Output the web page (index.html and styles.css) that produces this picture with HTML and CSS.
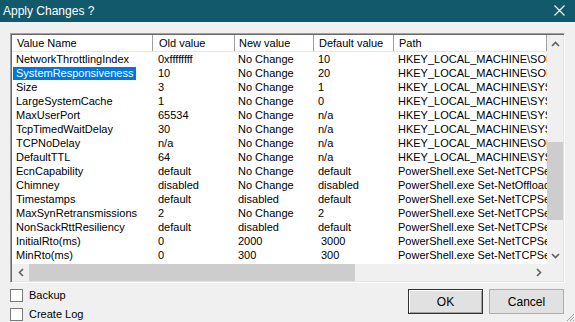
FILE: index.html
```html
<!DOCTYPE html>
<html>
<head>
<meta charset="utf-8">
<link rel="stylesheet" href="styles.css">
</head>
<body>
<div class="window">
  <div class="titlebar">
    <span class="title">Apply Changes ?</span>
    <svg class="close" width="11" height="11" viewBox="0 0 11 11"><path d="M0.5 0.5 L10.5 10.5 M10.5 0.5 L0.5 10.5" stroke="#fff" stroke-width="1.2" fill="none"/></svg>
  </div>
  <div class="content">
    <div class="listbox">
      <div class="viewport">
        <div class="row header">
          <div class="c c1">Value Name</div>
          <div class="c c2">Old value</div>
          <div class="c c3">New value</div>
          <div class="c c4">Default value</div>
          <div class="c c5">Path</div>
        </div>
        <div class="row"><div class="c c1"><span class="t">NetworkThrottlingIndex</span></div><div class="c c2">0xffffffff</div><div class="c c3">No Change</div><div class="c c4">10</div><div class="c c5">HKEY_LOCAL_MACHINE\SOFTWARE\Microsoft</div></div>
        <div class="row"><div class="c c1"><span class="t sel">SystemResponsiveness</span></div><div class="c c2">10</div><div class="c c3">No Change</div><div class="c c4">20</div><div class="c c5">HKEY_LOCAL_MACHINE\SOFTWARE\Microsoft</div></div>
        <div class="row"><div class="c c1"><span class="t">Size</span></div><div class="c c2">3</div><div class="c c3">No Change</div><div class="c c4">1</div><div class="c c5">HKEY_LOCAL_MACHINE\SYSTEM\CurrentControlSet</div></div>
        <div class="row"><div class="c c1"><span class="t">LargeSystemCache</span></div><div class="c c2">1</div><div class="c c3">No Change</div><div class="c c4">0</div><div class="c c5">HKEY_LOCAL_MACHINE\SYSTEM\CurrentControlSet</div></div>
        <div class="row"><div class="c c1"><span class="t">MaxUserPort</span></div><div class="c c2">65534</div><div class="c c3">No Change</div><div class="c c4">n/a</div><div class="c c5">HKEY_LOCAL_MACHINE\SYSTEM\CurrentControlSet</div></div>
        <div class="row"><div class="c c1"><span class="t">TcpTimedWaitDelay</span></div><div class="c c2">30</div><div class="c c3">No Change</div><div class="c c4">n/a</div><div class="c c5">HKEY_LOCAL_MACHINE\SYSTEM\CurrentControlSet</div></div>
        <div class="row"><div class="c c1"><span class="t">TCPNoDelay</span></div><div class="c c2">n/a</div><div class="c c3">No Change</div><div class="c c4">n/a</div><div class="c c5">HKEY_LOCAL_MACHINE\SOFTWARE\Microsoft</div></div>
        <div class="row"><div class="c c1"><span class="t">DefaultTTL</span></div><div class="c c2">64</div><div class="c c3">No Change</div><div class="c c4">n/a</div><div class="c c5">HKEY_LOCAL_MACHINE\SYSTEM\CurrentControlSet</div></div>
        <div class="row"><div class="c c1"><span class="t">EcnCapability</span></div><div class="c c2">default</div><div class="c c3">No Change</div><div class="c c4">default</div><div class="c c5">PowerShell.exe Set-NetTCPSetting</div></div>
        <div class="row"><div class="c c1"><span class="t">Chimney</span></div><div class="c c2">disabled</div><div class="c c3">No Change</div><div class="c c4">disabled</div><div class="c c5">PowerShell.exe Set-NetOffloadGlobalSetting</div></div>
        <div class="row"><div class="c c1"><span class="t">Timestamps</span></div><div class="c c2">default</div><div class="c c3">disabled</div><div class="c c4">default</div><div class="c c5">PowerShell.exe Set-NetTCPSetting</div></div>
        <div class="row"><div class="c c1"><span class="t">MaxSynRetransmissions</span></div><div class="c c2">2</div><div class="c c3">No Change</div><div class="c c4">2</div><div class="c c5">PowerShell.exe Set-NetTCPSetting</div></div>
        <div class="row"><div class="c c1"><span class="t">NonSackRttResiliency</span></div><div class="c c2">default</div><div class="c c3">disabled</div><div class="c c4">default</div><div class="c c5">PowerShell.exe Set-NetTCPSetting</div></div>
        <div class="row"><div class="c c1"><span class="t">InitialRto(ms)</span></div><div class="c c2">0</div><div class="c c3">2000</div><div class="c c4 ind">3000</div><div class="c c5">PowerShell.exe Set-NetTCPSetting</div></div>
        <div class="row"><div class="c c1"><span class="t">MinRto(ms)</span></div><div class="c c2">0</div><div class="c c3">300</div><div class="c c4 ind">300</div><div class="c c5">PowerShell.exe Set-NetTCPSetting</div></div>
      </div>
      <div class="vscroll">
        <div class="arrow"><svg width="9" height="6" viewBox="0 0 9 6"><path d="M1 5 L4.5 1.5 L8 5" stroke="#606060" stroke-width="1.6" fill="none"/></svg></div>
        <div class="vtrack"><div class="vthumb"></div></div>
        <div class="arrow"><svg width="9" height="6" viewBox="0 0 9 6"><path d="M1 1 L4.5 4.5 L8 1" stroke="#606060" stroke-width="1.6" fill="none"/></svg></div>
      </div>
      <div class="hscroll">
        <div class="harrow"><svg width="6" height="9" viewBox="0 0 6 9"><path d="M5 1 L1.5 4.5 L5 8" stroke="#606060" stroke-width="1.6" fill="none"/></svg></div>
        <div class="htrack"><div class="hthumb"></div></div>
        <div class="harrow"><svg width="6" height="9" viewBox="0 0 6 9"><path d="M1 1 L4.5 4.5 L1 8" stroke="#606060" stroke-width="1.6" fill="none"/></svg></div>
      </div>
      <div class="corner"></div>
    </div>
    <div class="footer">
      <div class="checks">
        <label class="check"><span class="box"></span><span>Backup</span></label>
        <label class="check"><span class="box"></span><span>Create Log</span></label>
      </div>
      <div class="buttons">
        <div class="btn default">OK</div>
        <div class="btn">Cancel</div>
      </div>
    </div>
  </div>
  <svg class="grip" width="10" height="10" viewBox="0 0 10 10"><path d="M9 2 L2 9 M9 5 L5 9 M9 8 L8 9" stroke="#a0a0a0" stroke-width="1" fill="none"/></svg>
</div>
</body>
</html>
```
FILE: styles.css
```css
html, body {
  margin: 0;
  padding: 0;
}
body {
  width: 575px;
  height: 322px;
  overflow: hidden;
  background: #f0f0f0;
  font-family: "Liberation Sans", Arial, sans-serif;
  font-size: 11px;
  color: #000;
}
.window {
  position: relative;
  width: 575px;
  height: 322px;
}
.titlebar {
  height: 22px;
  background: #125a6b;
  color: #fff;
  display: flex;
  align-items: center;
  justify-content: space-between;
  padding: 0 10px 0 3px;
}
.title {
  font-size: 12px;
  line-height: 22px;
}
.close {
  display: block;
  margin-top: -2px;
}
.content {
  padding: 11px 11px 0 10px;
}
.listbox {
  width: 551px;
  height: 246px;
  border-style: solid;
  border-width: 1px;
  border-color: #a0a0a0 #ffffff #ffffff #a0a0a0;
  box-shadow: inset 1px 1px 0 #696969, inset -1px -1px 0 #e3e3e3;
  padding: 1px 1px 1px 1px;
  background: #fff;
  display: grid;
  grid-template-columns: 535px 16px;
  grid-template-rows: 229px 17px;
}
.viewport {
  overflow: hidden;
  background: #fff;
}
.row {
  display: flex;
  height: 14px;
  line-height: 14px;
  white-space: nowrap;
}
.row.header {
  height: 17px;
  line-height: 17px;
  border-bottom: 1px solid #e5e5e5;
  box-sizing: border-box;
  height: 17px;
}
.c {
  flex: none;
  overflow: hidden;
  box-sizing: border-box;
  padding-left: 5px;
}
.c1 { width: 140px; padding-left: 1px; }
.c2 { width: 82px; padding-left: 6px; }
.c3 { width: 79px; padding-left: 4px; }
.c4 { width: 80px; }
.c5 { width: 154px; }
.header .c1 { padding-left: 5px; }
.header .c2, .header .c3, .header .c4, .header .c5 {
  border-left: 1px solid #a0a0a0;
}
.header .c5 { border-right: 1px solid #a0a0a0; }
.c4.ind { padding-left: 8px; }
.t {
  display: inline-block;
  padding: 0 3px;
  line-height: 13px;
}
.t.sel {
  background: #0078d7;
  color: #fff;
}
.vscroll {
  background: #f0f0f0;
  display: flex;
  flex-direction: column;
}
.arrow {
  height: 17px;
  display: flex;
  align-items: center;
  justify-content: center;
  flex: none;
}
.vtrack {
  flex: 1;
  padding-top: 90px;
}
.vthumb {
  width: 16px;
  height: 78px;
  background: #cdcdcd;
}
.hscroll {
  background: #f0f0f0;
  display: flex;
}
.harrow {
  width: 17px;
  display: flex;
  align-items: center;
  justify-content: center;
  flex: none;
}
.htrack {
  flex: 1;
  display: flex;
  align-items: stretch;
}
.hthumb {
  width: 326px;
  background: #cdcdcd;
}
.corner {
  background: #f0f0f0;
}
.footer {
  display: flex;
  justify-content: space-between;
  margin-top: 3px;
}
.checks {
  display: flex;
  flex-direction: column;
  gap: 1px;
}
.check {
  display: flex;
  align-items: center;
  height: 18px;
  gap: 6px;
}
.box {
  width: 11px;
  height: 11px;
  border: 1px solid #7a7a7a;
  background: #fff;
}
.buttons {
  display: flex;
  gap: 6px;
  margin-top: 3px;
}
.btn {
  width: 75px;
  height: 25px;
  box-sizing: border-box;
  background: #e1e1e1;
  border: 1px solid #adadad;
  font-size: 12px;
  display: flex;
  align-items: center;
  justify-content: center;
}
.btn.default {
  border: 1px solid #333;
  box-shadow: inset 1px 1px 0 #fff, inset -1px -1px 0 #a0a0a0;
}
.grip {
  position: absolute;
  right: 0;
  bottom: 0;
}
```
